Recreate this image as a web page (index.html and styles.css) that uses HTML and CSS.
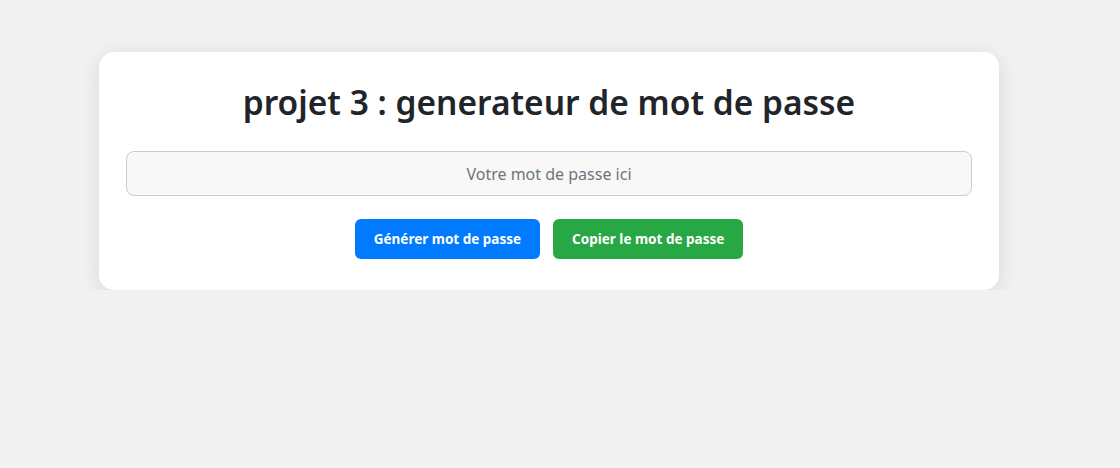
FILE: index.html
```html
<!DOCTYPE html>
<html lang="fr">
<head>
<meta charset="utf-8">
<title>Générateur de mot de passe</title>
<link rel="stylesheet" href="styles.css">
</head>
<body>
<main class="card">
  <h1 class="title">projet 3 : generateur de mot de passe</h1>
  <input class="field" type="text" placeholder="Votre mot de passe ici" readonly>
  <div class="actions">
    <button class="btn btn-blue" type="button">Générer mot de passe</button>
    <button class="btn btn-green" type="button">Copier le mot de passe</button>
  </div>
</main>
</body>
</html>
```
FILE: styles.css
```css
html, body {
  margin: 0;
  background: #f1f1f1;
}
body {
  padding: 52px 121px 0 99px;
  font-family: "Noto Sans", "Open Sans", sans-serif;
  color: #212529;
}
.card {
  width: 900px;
  box-sizing: border-box;
  background: #fff;
  border-radius: 15px;
  box-shadow: 0 4px 20px rgba(0, 0, 0, 0.1);
  padding: 20px 27px 31px;
  display: flex;
  flex-direction: column;
  align-items: stretch;
}
.title {
  margin: 10px 0 29px;
  font-size: 33.5px;
  line-height: 40px;
  font-weight: 600;
  text-align: center;
  color: #212529;
}
.field {
  height: 45px;
  box-sizing: border-box;
  border: 1px solid #ccc;
  border-radius: 8px;
  background: #f8f8f8;
  font-family: inherit;
  font-size: 16px;
  text-align: center;
  color: #495057;
  outline: none;
}
.field::placeholder {
  color: #6c757d;
}
.actions {
  margin-top: 23px;
  display: flex;
  justify-content: center;
  gap: 13px;
}
.btn {
  height: 40px;
  padding: 0 19px;
  border: none;
  border-radius: 6px;
  color: #fff;
  font-family: inherit;
  font-size: 13.5px;
  font-weight: 700;
  cursor: pointer;
}
.btn-blue { background: #007bff; }
.btn-green { background: #28a745; }
```
